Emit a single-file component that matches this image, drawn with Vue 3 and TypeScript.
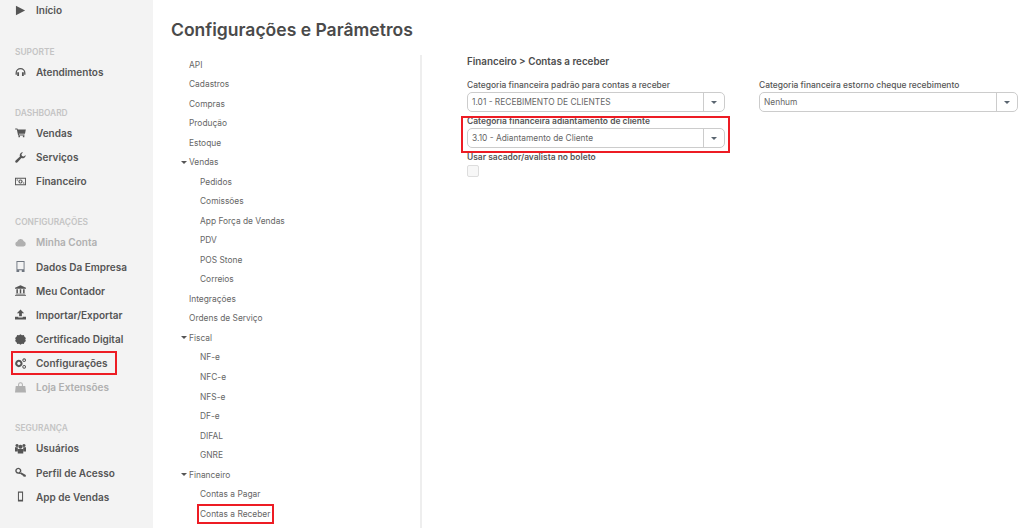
<script setup lang="ts">
interface NavItem { label: string; icon: string; muted?: boolean; marked?: boolean }
interface NavSection { title?: string; items: NavItem[] }
interface TreeItem { label: string; level: number; open?: boolean; marked?: boolean }

const sections: NavSection[] = [
  { items: [{ label: 'Início', icon: 'play' }] },
  { title: 'SUPORTE', items: [{ label: 'Atendimentos', icon: 'headphones' }] },
  { title: 'DASHBOARD', items: [
    { label: 'Vendas', icon: 'cart' },
    { label: 'Serviços', icon: 'wrench' },
    { label: 'Financeiro', icon: 'money' },
  ] },
  { title: 'CONFIGURAÇÕES', items: [
    { label: 'Minha Conta', icon: 'cloud', muted: true },
    { label: 'Dados Da Empresa', icon: 'building' },
    { label: 'Meu Contador', icon: 'bank' },
    { label: 'Importar/Exportar', icon: 'upload' },
    { label: 'Certificado Digital', icon: 'cert' },
    { label: 'Configurações', icon: 'cogs', marked: true },
    { label: 'Loja Extensões', icon: 'bag', muted: true },
  ] },
  { title: 'SEGURANÇA', items: [
    { label: 'Usuários', icon: 'users' },
    { label: 'Perfil de Acesso', icon: 'key' },
    { label: 'App de Vendas', icon: 'mobile' },
  ] },
]

const tree: TreeItem[] = [
  { label: 'API', level: 0 }, { label: 'Cadastros', level: 0 }, { label: 'Compras', level: 0 },
  { label: 'Produção', level: 0 }, { label: 'Estoque', level: 0 }, { label: 'Vendas', level: 0, open: true },
  { label: 'Pedidos', level: 1 }, { label: 'Comissões', level: 1 }, { label: 'App Força de Vendas', level: 1 },
  { label: 'PDV', level: 1 }, { label: 'POS Stone', level: 1 }, { label: 'Correios', level: 1 },
  { label: 'Integrações', level: 0 }, { label: 'Ordens de Serviço', level: 0 }, { label: 'Fiscal', level: 0, open: true },
  { label: 'NF-e', level: 1 }, { label: 'NFC-e', level: 1 }, { label: 'NFS-e', level: 1 }, { label: 'DF-e', level: 1 },
  { label: 'DIFAL', level: 1 }, { label: 'GNRE', level: 1 }, { label: 'Financeiro', level: 0, open: true },
  { label: 'Contas a Pagar', level: 1 }, { label: 'Contas a Receber', level: 1, marked: true },
]

const icons: Record<string, string> = {
  play: 'M1 0.8 L11 6 L1 11.2 Z',
  headphones: 'M0.6 7.5 A5.4 5.4 0 0 1 11.4 7.5 V9.5 H10 V7.5 A4 4 0 0 0 2 7.5 V9.5 H0.6 Z M2.4 6.8 H4.4 V10.8 H2.4 Z M7.6 6.8 H9.6 V10.8 H7.6 Z',
  cart: 'M0.2 1.6 H2.6 L3 2.6 H11.8 L10.9 7.4 H4.2 L4.4 8.2 H10.4 V9.3 H3.4 L2 2.7 H0.2 Z M3.8 9.6 H5.4 V11.2 H3.8 Z M8.6 9.6 H10.2 V11.2 H8.6 Z',
  wrench: 'M11.6 3.2 A3.4 3.4 0 0 1 7 6.6 L2.8 11.3 A1.4 1.4 0 0 1 0.7 9.3 L5.4 5 A3.4 3.4 0 0 1 8.8 0.4 L7 2.4 L7.6 4.4 L9.6 5 Z',
  money: 'M0 2 H12 V10 H0 Z M1 3 V9 H11 V3 Z M6 3.7 A2.3 2.3 0 1 1 5.99 3.7 Z M6 5 A1 1 0 1 0 6.01 5 Z M1.8 3.8 H3.2 V4.8 H1.8 Z M8.8 7.2 H10.2 V8.2 H8.8 Z',
  cloud: 'M3 10.4 A2.8 2.8 0 0 1 2.4 4.9 A3.8 3.8 0 0 1 9.6 4.6 A3 3 0 0 1 9.4 10.4 Z',
  building: 'M1.6 0 H10.4 V12 H7.4 V10 H4.6 V12 H1.6 Z M2.6 1 V9 H9.4 V1 Z',
  bank: 'M6 0.2 L12 3 V4 H0 V3 Z M1.5 4.6 H3.2 V9 H1.5 Z M5.2 4.6 H6.8 V9 H5.2 Z M8.8 4.6 H10.5 V9 H8.8 Z M0.8 9.5 H11.2 V10.4 H0.8 Z M0 10.8 H12 V11.8 H0 Z',
  upload: 'M6 0.6 L10 4.6 H7.5 V8 H4.5 V4.6 H2 Z M0 8.4 H3.6 V9.4 H8.4 V8.4 H12 V11.4 H0 Z',
  cert: 'M6 0.2 L7.6 1.3 L9.6 1.1 L10.4 2.9 L11.9 4.3 L11.2 6 L11.9 7.7 L10.4 9.1 L9.6 10.9 L7.6 10.7 L6 11.8 L4.4 10.7 L2.4 10.9 L1.6 9.1 L0.1 7.7 L0.8 6 L0.1 4.3 L1.6 2.9 L2.4 1.1 L4.4 1.3 Z',
  cogs: 'M4.2 2 A4 4 0 1 1 4.19 2 Z M4.2 4.2 A1.8 1.8 0 1 0 4.21 4.2 Z M10 0.4 A2 2 0 1 1 9.99 0.4 Z M10 1.5 A0.9 0.9 0 1 0 10.01 1.5 Z M10 7.6 A2 2 0 1 1 9.99 7.6 Z M10 8.7 A0.9 0.9 0 1 0 10.01 8.7 Z',
  bag: 'M0.8 4.4 H3.4 V2.8 A2.6 2.6 0 0 1 8.6 2.8 V4.4 H11.2 L12 11.4 H0 Z M4.5 4.4 H7.5 V2.8 A1.5 1.5 0 0 0 4.5 2.8 Z',
  users: 'M6 2 A2.2 2.2 0 1 1 5.99 2 Z M2.2 1 A1.7 1.7 0 1 1 2.19 1 Z M9.8 1 A1.7 1.7 0 1 1 9.79 1 Z M0 4.6 H3 L3.2 9.2 H0 Z M9 4.6 H12 V9.2 H8.8 Z M3 6.6 H9 V11.4 H3 Z',
  key: 'M3.6 0.8 A3.3 3.3 0 1 1 3.59 0.8 Z M3.6 2.3 A1.8 1.8 0 1 0 3.61 2.3 Z M6 5.4 L11.8 8.8 V10.6 L10.6 10.4 L9.8 10.8 L8.8 9.6 L5.2 7 Z',
  mobile: 'M3.2 0.6 H8.8 V11.4 H3.2 Z M4.3 2 V9.6 H7.7 V2 Z',
}
</script>

<template>
  <div class="page">
    <aside class="sidebar">
      <section v-for="(section, i) in sections" :key="i" class="nav-section">
        <h4 v-if="section.title" class="nav-title">{{ section.title }}</h4>
        <a
          v-for="item in section.items"
          :key="item.label"
          class="nav-item"
          :class="{ muted: item.muted, marked: item.marked }"
        >
          <svg class="nav-icon" :class="'icon-' + item.icon" viewBox="0 0 12 12" fill="currentColor" fill-rule="evenodd">
            <path :d="icons[item.icon]" />
          </svg>
          <span>{{ item.label }}</span>
        </a>
      </section>
    </aside>

    <main class="content">
      <h1 class="page-title">Configurações e Parâmetros</h1>
      <div class="panels">
        <nav class="tree">
          <div
            v-for="node in tree"
            :key="node.label + node.level"
            class="tree-row"
            :class="'level-' + node.level"
          >
            <i v-if="node.open" class="caret"></i>
            <span :class="{ marked: node.marked }">{{ node.label }}</span>
          </div>
        </nav>

        <div class="form">
          <h2 class="form-title">Financeiro &gt; Contas a receber</h2>
          <div class="form-grid">
            <div class="fields">
              <div class="field">
                <label>Categoria financeira padrão para contas a receber</label>
                <div class="select">
                  <span class="value">1.01 - RECEBIMENTO DE CLIENTES</span>
                  <span class="addon"><i class="caret dark"></i></span>
                </div>
              </div>
              <div class="field marked-field">
                <label>Categoria financeira adiantamento de cliente</label>
                <div class="select">
                  <span class="value">3.10 - Adiantamento de Cliente</span>
                  <span class="addon"><i class="caret dark"></i></span>
                </div>
              </div>
              <div class="field strong">
                <label>Usar sacador/avalista no boleto</label>
                <span class="checkbox"></span>
              </div>
            </div>
            <div class="fields">
              <div class="field">
                <label>Categoria financeira estorno cheque recebimento</label>
                <div class="select">
                  <span class="value">Nenhum</span>
                  <span class="addon"><i class="caret dark"></i></span>
                </div>
              </div>
            </div>
          </div>
        </div>
      </div>
    </main>
  </div>
</template>

<style>
html, body { margin: 0; background: #fff; overflow: hidden; }
</style>

<style scoped>
.page {
  display: flex;
  height: 528px;
  overflow: hidden;
  font-family: Inter, "Liberation Sans", sans-serif;
  color: #555;
}
.sidebar {
  flex: none;
  width: 153px;
  background: #f3f3f3;
  box-sizing: border-box;
  display: flex;
  flex-direction: column;
  gap: 20.8px;
}
.nav-section:first-child { margin-top: -2.1px; padding-bottom: 1px; }
.nav-title {
  margin: 0;
  height: 16px;
  line-height: 16px;
  padding-left: 15px;
  font-size: 8.4px;
  font-weight: 600;
  color: #c4c4c4;
}
.nav-item {
  display: flex;
  align-items: center;
  height: 24.2px;
  padding-left: 14.5px;
  font-size: 10px;
  font-weight: 600;
  color: #555;
}
.nav-item.muted { color: #b0b0b0; }
.nav-item.marked {
  outline: 2px solid #ed1c24;
  outline-offset: -2px;
  margin-left: 11px;
  padding-left: 3.5px;
  width: 106px;
  box-sizing: border-box;
}
.nav-icon { width: 11px; height: 11px; flex: none; margin-right: 10.5px; }
.icon-building { color: #6f7680; }
.content { flex: 1; min-width: 0; padding: 0 6px 0 18px; }
.page-title {
  margin: 0;
  padding-top: 19px;
  height: 36px;
  line-height: 22px;
  font-size: 17.55px;
  font-weight: 600;
  color: #4a4a4a;
  box-sizing: content-box;
}
.panels { display: flex; }
.tree {
  width: 249px;
  height: 473px;
  flex: none;
  border-right: 2px solid #eee;
  overflow: hidden;
}
.tree-row {
  display: flex;
  align-items: center;
  height: 19.52px;
  font-size: 8.4px;
  color: #666;
}
.tree-row.level-0 { padding-left: 18px; }
.tree-row.level-1 { padding-left: 29px; }
.tree-row .caret { margin-left: -8px; margin-right: 2px; }
.tree-row .marked { position: relative; }
.tree-row .marked::after {
  content: "";
  position: absolute;
  inset: -5px -4px -5px -3px;
  border: 2px solid #ed1c24;
}
.caret {
  display: inline-block;
  width: 0;
  height: 0;
  border-left: 3px solid transparent;
  border-right: 3px solid transparent;
  border-top: 3px solid #555;
}
.form { flex: 1; min-width: 0; padding-left: 45px; }
.form-title {
  margin: 0;
  height: 24px;
  line-height: 13px;
  font-size: 9.8px;
  font-weight: 600;
  color: #4d4d4d;
}
.form-grid {
  display: grid;
  grid-template-columns: 258px 259px;
  column-gap: 34px;
}
.fields { display: flex; flex-direction: column; }
.field { display: flex; flex-direction: column; align-items: flex-start; }
.field label {
  height: 13px;
  line-height: 13px;
  font-size: 8.45px;
  font-weight: 500;
  color: #555;
}
.marked-field label,
.strong label { font-weight: 600; }
.marked-field { position: relative; }
.marked-field::after {
  content: "";
  position: absolute;
  inset: 1px -5px -2px -6px;
  border: 2px solid #ed1c24;
  pointer-events: none;
}
.select {
  display: flex;
  width: 100%;
  height: 20px;
  box-sizing: border-box;
  border: 1px solid #ccc;
  border-radius: 5px;
  margin-bottom: 3px;
}
.value {
  flex: 1;
  padding-left: 4px;
  line-height: 18px;
  font-size: 8.4px;
  color: #666;
}
.addon {
  flex: none;
  width: 20px;
  border-left: 1px solid #ccc;
  display: flex;
  align-items: center;
  justify-content: center;
}
.caret.dark { border-top-color: #5a6570; }
.checkbox {
  width: 12px;
  height: 12px;
  border: 1px solid #ddd;
  border-radius: 2px;
  background: #f7f7f7;
  box-sizing: border-box;
  margin-top: 1px;
}
</style>
